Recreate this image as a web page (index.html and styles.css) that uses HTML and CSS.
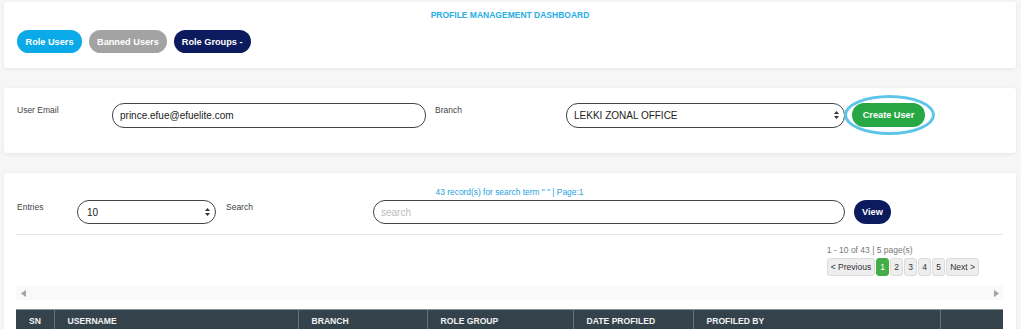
FILE: index.html
```html
<!DOCTYPE html>
<html lang="en">
<head>
  <meta charset="UTF-8">
  <title>Profile Management Dashboard</title>
  <link rel="stylesheet" href="styles.css">
</head>
<body>

  <div class="card top-card">
    <h2 class="page-title">PROFILE MANAGEMENT DASHBOARD</h2>
    <div class="tabs">
      <button class="pill pill-blue">Role Users</button>
      <button class="pill pill-gray">Banned Users</button>
      <button class="pill pill-navy">Role Groups -</button>
    </div>
  </div>

  <div class="card create-card">
    <form class="form-row" id="createForm">
      <label class="lbl lbl-email" for="email">User Email</label>
      <input class="field field-email" type="text" id="email" value="prince.efue@efuelite.com">
      <label class="lbl lbl-branch" for="branch">Branch</label>
      <div class="select-wrap select-branch">
        <select class="field" id="branch">
          <option>LEKKI ZONAL OFFICE</option>
        </select>
        <svg class="arrows" width="5" height="8" viewBox="0 0 5 8"><path d="M2.5 0 L5 3 H0 Z M2.5 8 L5 5 H0 Z" fill="#333"/></svg>
      </div>
      <button type="submit" class="pill pill-green focus-ring">Create User</button>
    </form>
  </div>

  <div class="card list-card">
    <div class="records">43 record(s) for search term " " | Page:1</div>

    <div class="form-row">
      <label class="lbl lbl-entries" for="entries">Entries</label>
      <div class="select-wrap select-entries">
        <select class="field" id="entries">
          <option>10</option>
          <option>25</option>
          <option>50</option>
        </select>
        <svg class="arrows" width="5" height="8" viewBox="0 0 5 8"><path d="M2.5 0 L5 3 H0 Z M2.5 8 L5 5 H0 Z" fill="#333"/></svg>
      </div>
      <label class="lbl lbl-search" for="search">Search</label>
      <input class="field field-search" type="text" id="search" placeholder="search">
      <button class="pill pill-navy btn-view">View</button>
    </div>

    <hr class="divider">

    <div class="pager-box">
      <div>
        <div class="pager-info">1 - 10 of 43 | 5 page(s)</div>
        <div class="pager">
          <a class="pg">&lt; Previous</a>
          <a class="pg active">1</a>
          <a class="pg">2</a>
          <a class="pg">3</a>
          <a class="pg">4</a>
          <a class="pg">5</a>
          <a class="pg">Next &gt;</a>
        </div>
      </div>
    </div>

    <div class="hscroll">
      <svg width="5" height="7" viewBox="0 0 5 7"><path d="M0 3.5 L5 0 V7 Z" fill="#a3a3a3"/></svg>
      <svg width="5" height="7" viewBox="0 0 5 7"><path d="M5 3.5 L0 0 V7 Z" fill="#a3a3a3"/></svg>
    </div>

    <table class="users">
      <thead>
        <tr>
          <th class="c-sn">SN</th>
          <th class="c-user">USERNAME</th>
          <th class="c-branch">BRANCH</th>
          <th class="c-role">ROLE GROUP</th>
          <th class="c-date">DATE PROFILED</th>
          <th class="c-by">PROFILED BY</th>
          <th class="c-act"></th>
        </tr>
      </thead>
    </table>
  </div>

</body>
</html>
```

FILE: styles.css
```css
* {
  box-sizing: border-box;
}

body {
  margin: 0;
  padding: 2px 5px 0 4px;
  background: #f6f6f6;
  font-family: 'Liberation Sans', Arial, sans-serif;
  color: #333;
  overflow: hidden;
}

.card {
  background: #ffffff;
  border-radius: 3px;
  box-shadow: 0 1px 4px rgba(0,0,0,0.07);
}

.top-card {
  padding: 7px 13px 15px;
}

.page-title {
  margin: 0 0 9px;
  text-align: center;
  font-size: 8.5px;
  line-height: 12px;
  font-weight: bold;
  color: #27aee6;
}

.tabs {
  display: flex;
  gap: 7px;
}

.pill {
  height: 23px;
  padding: 0 8px;
  border: none;
  border-radius: 12px;
  color: #fff;
  font-family: inherit;
  font-size: 9.2px;
  font-weight: bold;
  cursor: pointer;
}

.pill-blue { background: #0aa9e8; padding: 0 8.5px; }
.pill-gray { background: #a3a3a3; }
.pill-navy { background: #0c1a5e; }
.pill-green { background: #28a745; height: 24px; width: 73px; }

.create-card {
  margin-top: 20px;
  padding: 15px 13px 25px;
}

.form-row {
  display: flex;
  align-items: flex-start;
  margin: 0;
}

.lbl {
  font-size: 8.5px;
  line-height: 12px;
  color: #444;
  padding-top: 1px;
}

.lbl-email { width: 95px; }
.lbl-branch { width: 131px; margin-left: 9px; }
.lbl-entries { width: 60px; }
.lbl-search { width: 147px; margin-left: 10px; }

.field {
  height: 25px;
  border: 1px solid #444;
  border-radius: 12px;
  padding: 0 7px;
  font-family: inherit;
  font-size: 10px;
  color: #222;
  background: #fff;
  outline: none;
}

.field-email { width: 314px; }
.field-search { width: 472px; height: 24px; }

.field::placeholder {
  color: #bbb;
}

.select-wrap {
  position: relative;
}

.select-wrap select {
  width: 100%;
  -webkit-appearance: none;
  appearance: none;
}

.select-branch { width: 279px; margin-right: 7px; }
.select-entries { width: 139px; }
.select-entries select { height: 24px; padding-left: 9px; }

.arrows {
  position: absolute;
  right: 6px;
  top: 8px;
}

.focus-ring {
  position: relative;
}

.focus-ring::after {
  content: "";
  position: absolute;
  top: -8px;
  bottom: -8px;
  left: -8px;
  right: -10px;
  border: 3px solid #5cc5e8;
  border-radius: 50%;
}

.list-card {
  margin-top: 20px;
  padding: 13px 13px 0 12px;
}

.records {
  text-align: center;
  font-size: 8.4px;
  line-height: 12px;
  color: #1f9fe0;
  margin-bottom: 2px;
}

.list-card .form-row {
  padding-left: 1px;
}

.btn-view {
  width: 37px;
  height: 24px;
  padding: 0;
  margin-left: 9px;
}

.divider {
  border: none;
  border-top: 1px solid #e6e6e6;
  margin: 10px 0 0;
}

.pager-box {
  display: flex;
  justify-content: flex-end;
  padding-right: 24px;
  margin-top: 9px;
}

.pager-info {
  font-size: 8.5px;
  line-height: 12px;
  color: #777;
}

.pager {
  display: flex;
  gap: 1px;
  margin-top: 2px;
}

.pg {
  height: 18px;
  line-height: 16px;
  padding: 0 3px;
  min-width: 13px;
  text-align: center;
  border: 1px solid #dcdcdc;
  border-radius: 3px;
  background: #eeeeee;
  font-size: 8.5px;
  color: #333;
}

.pg.active {
  background: #45ad48;
  border-color: #45ad48;
  color: #fff;
}

.hscroll {
  margin-top: 10px;
  height: 14px;
  background: #f9f9f9;
  display: flex;
  align-items: center;
  justify-content: space-between;
  padding: 0 4px 0 5px;
}

.users {
  margin-top: 9px;
  width: 100%;
  border-collapse: collapse;
  table-layout: fixed;
}

.users th {
  background: #34434b;
  color: #f2f2f2;
  text-align: left;
  font-size: 8.6px;
  font-weight: bold;
  line-height: 12px;
  padding: 5px 13px 8px;
  border-top: 1px solid #8a959b;
  border-left: 1px solid #65737a;
}

.users th:first-child {
  border-left: none;
}

.c-sn { width: 38px; }
.c-user { width: 244px; }
.c-branch { width: 129px; }
.c-role { width: 146px; }
.c-date { width: 120px; }
.c-by { width: 247px; }
.c-act { width: 63px; }
```
